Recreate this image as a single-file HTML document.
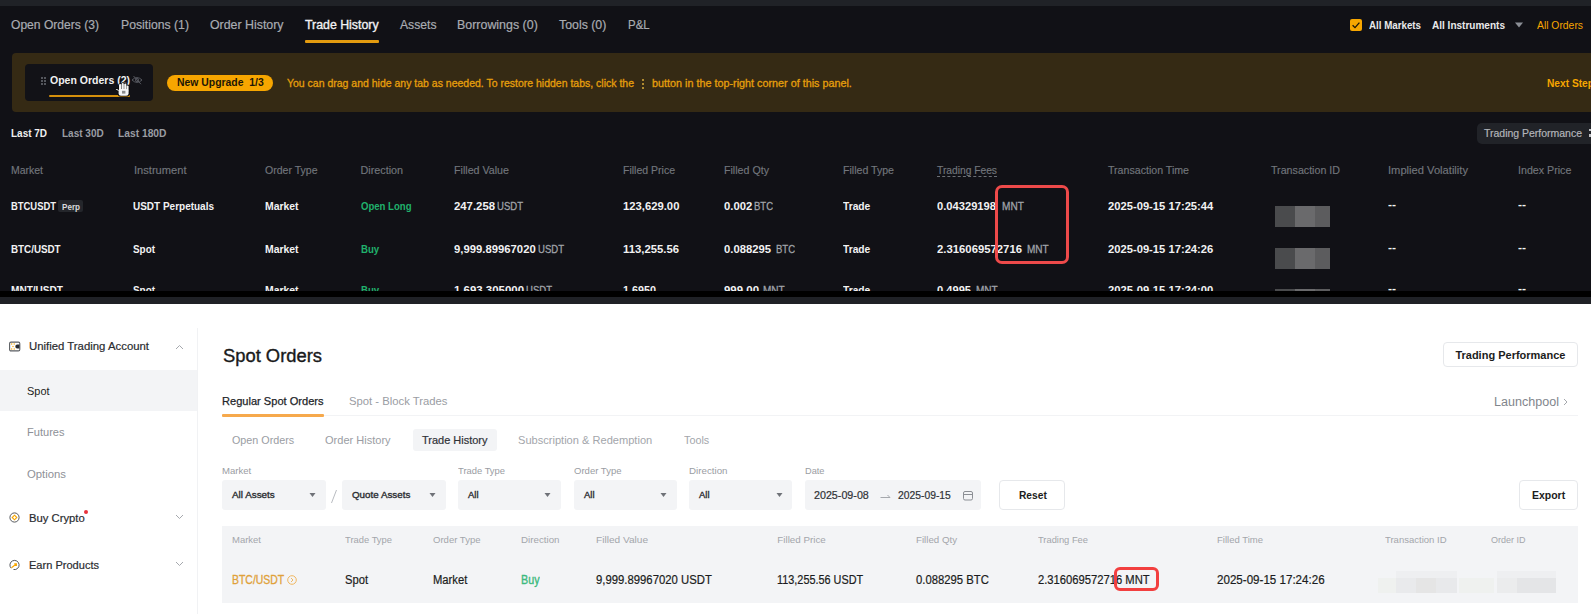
<!DOCTYPE html>
<html><head><meta charset="utf-8"><style>
html,body{margin:0;padding:0;}
body{width:1591px;height:614px;position:relative;overflow:hidden;background:#fff;font-family:"Liberation Sans",sans-serif;}
.t{position:absolute;white-space:pre;}
</style></head><body>
<div style="position:absolute;left:0px;top:0px;width:1591px;height:6px;background:#202227;"></div>
<div style="position:absolute;left:0px;top:6px;width:1591px;height:285px;background:#111116;"></div>
<div style="position:absolute;left:0px;top:291px;width:1591px;height:6px;background:#000000;"></div>
<div style="position:absolute;left:0px;top:297px;width:1591px;height:7px;background:#1f2126;"></div>
<div style="position:absolute;left:305px;top:40px;width:74px;height:3px;background:#e39b0f;border-radius:1px;"></div>
<div style="position:absolute;left:1350px;top:19px;width:12px;height:12px;background:#f7a600;border-radius:2px;"></div>
<svg style="position:absolute;left:1350px;top:19px" width="12" height="12" viewBox="0 0 12 12"><path d="M2.6 6.2 L5 8.6 L9.4 3.6" fill="none" stroke="#1a1406" stroke-width="1.3"/></svg>
<svg style="position:absolute;left:1514px;top:21px" width="10" height="8" viewBox="0 0 10 8"><path d="M1 1.5 L9 1.5 L5 6.5 Z" fill="#8c8f96"/></svg>
<div style="position:absolute;left:11.5px;top:53px;width:1579.5px;height:59px;background:#352a14;border-radius:4px 0 0 4px;"></div>
<div style="position:absolute;left:25px;top:64px;width:128px;height:37px;background:#121217;border-radius:4px;"></div>
<div style="position:absolute;left:40.5px;top:76.5px;width:2px;height:2px;background:#6b6e74;border-radius:1px"></div>
<div style="position:absolute;left:40.5px;top:79.5px;width:2px;height:2px;background:#6b6e74;border-radius:1px"></div>
<div style="position:absolute;left:40.5px;top:82.5px;width:2px;height:2px;background:#6b6e74;border-radius:1px"></div>
<div style="position:absolute;left:43.5px;top:76.5px;width:2px;height:2px;background:#6b6e74;border-radius:1px"></div>
<div style="position:absolute;left:43.5px;top:79.5px;width:2px;height:2px;background:#6b6e74;border-radius:1px"></div>
<div style="position:absolute;left:43.5px;top:82.5px;width:2px;height:2px;background:#6b6e74;border-radius:1px"></div>
<svg style="position:absolute;left:131px;top:75px" width="12" height="10" viewBox="0 0 12 10"><path d="M1 5 Q6 0.2 11 5 Q6 9.8 1 5 Z" fill="none" stroke="#5c5f66" stroke-width="0.9"/><circle cx="6" cy="5" r="1.5" fill="none" stroke="#5c5f66" stroke-width="0.9"/><path d="M2.5 1 L10 9.2" stroke="#5c5f66" stroke-width="0.9"/></svg>
<div style="position:absolute;left:49px;top:95px;width:81px;height:2px;background:#d48f0c;border-radius:1px;"></div>
<div style="position:absolute;left:167px;top:74.5px;width:106px;height:16.0px;background:#f7a600;border-radius:8px;"></div>
<div style="position:absolute;left:642px;top:79px;width:2px;height:10px;background:repeating-linear-gradient(#b08a30 0 2px, transparent 2px 4px)"></div>
<div style="position:absolute;left:1477px;top:122.5px;width:114px;height:21.5px;background:#212328;border-radius:5px 0 0 5px;"></div>
<div style="position:absolute;left:1589px;top:129px;width:2px;height:2px;background:#c0c2c6;"></div>
<div style="position:absolute;left:1589px;top:134px;width:2px;height:3px;background:#c0c2c6;"></div>
<div style="position:absolute;left:937px;top:176px;width:60px;height:0;border-top:1px dashed #6b6f75"></div>
<div style="position:absolute;left:58px;top:200px;width:25px;height:12px;background:#24262b;border-radius:2px;"></div>
<div style="position:absolute;left:1275px;top:206px;width:55px;height:21px;background:linear-gradient(90deg,#4a4b4d 0 20px,#6a6a6c 20px 40px,#5c5c5e 40px)"></div>
<div style="position:absolute;left:1275px;top:247.5px;width:55px;height:21.19999999999999px;background:linear-gradient(90deg,#4a4b4d 0 20px,#6a6a6c 20px 40px,#5c5c5e 40px)"></div>
<div style="position:absolute;left:1275px;top:289px;width:55px;height:11px;background:linear-gradient(90deg,#4a4b4d 0 20px,#6a6a6c 20px 40px,#5c5c5e 40px)"></div>
<div style="position:absolute;left:197px;top:328px;width:1px;height:286px;background:#f1f2f4;"></div>
<svg style="position:absolute;left:9px;top:341px" width="12" height="11" viewBox="0 0 12 11"><rect x="0.6" y="1.1" width="10.2" height="8.8" rx="1.4" fill="#fff" stroke="#5a5d62" stroke-width="1.1"/><g fill="#f7a600"><circle cx="2.7" cy="3" r="0.7"/><circle cx="5.2" cy="3" r="0.7"/><circle cx="4" cy="5.5" r="0.7"/><circle cx="2.7" cy="8" r="0.7"/><circle cx="5.2" cy="8" r="0.7"/></g><path d="M10.5 3.6 L8.2 3.6 A1.9 1.9 0 0 0 8.2 7.4 L10.5 7.4 Z" fill="#2a2c30"/></svg>
<svg style="position:absolute;left:175px;top:344px" width="9" height="6" viewBox="0 0 9 6"><path d="M1 5 L4.5 1.5 L8 5" fill="none" stroke="#a5a8ad" stroke-width="1"/></svg>
<div style="position:absolute;left:0px;top:370px;width:197px;height:41px;background:#f3f4f6;"></div>
<svg style="position:absolute;left:9px;top:512px" width="11" height="11" viewBox="0 0 11 11"><circle cx="5.5" cy="5.5" r="4.6" fill="none" stroke="#55585d" stroke-width="1"/><path d="M5.5 3.2 L7.8 5.5 L5.5 7.8 L3.2 5.5 Z" fill="none" stroke="#f7a600" stroke-width="1.1"/></svg>
<div style="position:absolute;left:83.5px;top:509.5px;width:4px;height:4px;border-radius:2px;background:#e8323c"></div>
<svg style="position:absolute;left:175px;top:514px" width="9" height="6" viewBox="0 0 9 6"><path d="M1 1 L4.5 4.5 L8 1" fill="none" stroke="#a5a8ad" stroke-width="1"/></svg>
<svg style="position:absolute;left:9px;top:559px" width="11" height="12" viewBox="0 0 11 12"><path d="M2.2 9.2 A4.6 4.6 0 1 1 4.5 10.5" fill="none" stroke="#55585d" stroke-width="1"/><path d="M2.5 8.8 L7.2 5 M5.2 4.8 L7.4 4.8 L7.4 7" fill="none" stroke="#f7a600" stroke-width="1.1"/></svg>
<svg style="position:absolute;left:175px;top:561px" width="9" height="6" viewBox="0 0 9 6"><path d="M1 1 L4.5 4.5 L8 1" fill="none" stroke="#a5a8ad" stroke-width="1"/></svg>
<div style="position:absolute;left:1443px;top:342px;width:135px;height:25px;box-sizing:border-box;border:1px solid #e6e8eb;border-radius:4px;background:#fff"></div>
<svg style="position:absolute;left:1563px;top:398px" width="5" height="8" viewBox="0 0 5 8"><path d="M1 1 L4 4 L1 7" fill="none" stroke="#a5a8ad" stroke-width="1"/></svg>
<div style="position:absolute;left:222px;top:414.5px;width:1356px;height:1.0px;background:#f2f3f5;"></div>
<div style="position:absolute;left:222px;top:414px;width:102px;height:2.5px;background:#f6a94c;border-radius:1px;"></div>
<div style="position:absolute;left:412.5px;top:428.5px;width:84.5px;height:22.5px;background:#f3f4f6;border-radius:3px;"></div>
<div style="position:absolute;left:222px;top:480px;width:104px;height:30px;background:#f3f4f6;border-radius:3px;"></div>
<svg style="position:absolute;left:308.5px;top:492px" width="7" height="6" viewBox="0 0 7 6"><path d="M0.5 1 L6.5 1 L3.5 5 Z" fill="#6f7278"/></svg>
<div style="position:absolute;left:342px;top:480px;width:104px;height:30px;background:#f3f4f6;border-radius:3px;"></div>
<svg style="position:absolute;left:428.5px;top:492px" width="7" height="6" viewBox="0 0 7 6"><path d="M0.5 1 L6.5 1 L3.5 5 Z" fill="#6f7278"/></svg>
<div style="position:absolute;left:458px;top:480px;width:103px;height:30px;background:#f3f4f6;border-radius:3px;"></div>
<svg style="position:absolute;left:544px;top:492px" width="7" height="6" viewBox="0 0 7 6"><path d="M0.5 1 L6.5 1 L3.5 5 Z" fill="#6f7278"/></svg>
<div style="position:absolute;left:574px;top:480px;width:103px;height:30px;background:#f3f4f6;border-radius:3px;"></div>
<svg style="position:absolute;left:660px;top:492px" width="7" height="6" viewBox="0 0 7 6"><path d="M0.5 1 L6.5 1 L3.5 5 Z" fill="#6f7278"/></svg>
<div style="position:absolute;left:689px;top:480px;width:103px;height:30px;background:#f3f4f6;border-radius:3px;"></div>
<svg style="position:absolute;left:775.5px;top:492px" width="7" height="6" viewBox="0 0 7 6"><path d="M0.5 1 L6.5 1 L3.5 5 Z" fill="#6f7278"/></svg>
<svg style="position:absolute;left:330px;top:489px" width="8" height="15" viewBox="0 0 8 15"><path d="M6.5 1 L1.5 14" stroke="#b9bcc1" stroke-width="1"/></svg>
<div style="position:absolute;left:805px;top:480px;width:176px;height:30px;background:#f3f4f6;border-radius:3px;"></div>
<svg style="position:absolute;left:880px;top:493px" width="11" height="6" viewBox="0 0 11 6"><path d="M0.5 4.5 L10 4.5 L7.5 2" fill="none" stroke="#a5a8ad" stroke-width="1"/></svg>
<svg style="position:absolute;left:962px;top:490px" width="12" height="11" viewBox="0 0 12 11"><rect x="1.5" y="1.5" width="9" height="8.5" rx="1.5" fill="none" stroke="#8c8f95" stroke-width="1"/><path d="M1.5 4.5 L10.5 4.5" stroke="#8c8f95" stroke-width="1"/></svg>
<div style="position:absolute;left:999px;top:479.5px;width:66px;height:30.5px;box-sizing:border-box;border:1px solid #e6e8eb;border-radius:4px;background:#fff"></div>
<div style="position:absolute;left:1519px;top:480px;width:59px;height:30px;box-sizing:border-box;border:1px solid #e6e8eb;border-radius:4px;background:#fff"></div>
<div style="position:absolute;left:222px;top:526px;width:1356px;height:77px;background:#f3f4f6;"></div>
<svg style="position:absolute;left:286.5px;top:574.5px" width="10" height="10" viewBox="0 0 10 10"><circle cx="5" cy="5" r="4.3" fill="none" stroke="#f0b862" stroke-width="1"/><path d="M4 3 L6 5 L4 7" fill="none" stroke="#f0b862" stroke-width="1"/></svg>
<div style="position:absolute;left:1378px;top:578px;width:18px;height:15px;background:#eff1ef"></div>
<div style="position:absolute;left:1396px;top:571px;width:61px;height:7px;background:#eeeff1"></div>
<div style="position:absolute;left:1396px;top:578px;width:61px;height:15px;background:linear-gradient(90deg,#e9eaec 0 20px,#e5e5e5 20px 40px,#e8e9eb 40px)"></div>
<div style="position:absolute;left:1459px;top:578px;width:35px;height:15px;background:#eff1ef"></div>
<div style="position:absolute;left:1497px;top:571px;width:59px;height:7px;background:#eeeff1"></div>
<div style="position:absolute;left:1497px;top:578px;width:59px;height:15px;background:linear-gradient(90deg,#ebeced 0 20px,#e4e5e7 20px)"></div>
<div class="t" style="left:11.0px;top:19.00px;font-size:12.50px;line-height:12.50px;color:#a9acb2;transform:scaleX(0.9669);transform-origin:0 0;-webkit-text-stroke:0.2px #a9acb2;">Open Orders (3)</div>
<div class="t" style="left:120.7px;top:19.00px;font-size:12.50px;line-height:12.50px;color:#a9acb2;transform:scaleX(0.9786);transform-origin:0 0;-webkit-text-stroke:0.2px #a9acb2;">Positions (1)</div>
<div class="t" style="left:210.0px;top:19.00px;font-size:12.50px;line-height:12.50px;color:#a9acb2;transform:scaleX(0.9889);transform-origin:0 0;-webkit-text-stroke:0.2px #a9acb2;">Order History</div>
<div class="t" style="left:305.0px;top:19.00px;font-size:12.50px;line-height:12.50px;color:#f2f2f3;transform:scaleX(0.9871);transform-origin:0 0;-webkit-text-stroke:0.35px #f2f2f3;">Trade History</div>
<div class="t" style="left:399.5px;top:19.00px;font-size:12.50px;line-height:12.50px;color:#a9acb2;transform:scaleX(0.9729);transform-origin:0 0;-webkit-text-stroke:0.2px #a9acb2;">Assets</div>
<div class="t" style="left:457.0px;top:19.00px;font-size:12.50px;line-height:12.50px;color:#a9acb2;transform:scaleX(0.9941);transform-origin:0 0;-webkit-text-stroke:0.2px #a9acb2;">Borrowings (0)</div>
<div class="t" style="left:559.0px;top:19.00px;font-size:12.50px;line-height:12.50px;color:#a9acb2;transform:scaleX(0.9867);transform-origin:0 0;-webkit-text-stroke:0.2px #a9acb2;">Tools (0)</div>
<div class="t" style="left:627.6px;top:19.00px;font-size:12.50px;line-height:12.50px;color:#a9acb2;transform:scaleX(0.9179);transform-origin:0 0;-webkit-text-stroke:0.2px #a9acb2;">P&amp;L</div>
<div class="t" style="left:1369.0px;top:20.00px;font-size:11.50px;line-height:11.50px;color:#e9e9ea;font-weight:700;transform:scaleX(0.8475);transform-origin:0 0;">All Markets</div>
<div class="t" style="left:1432.0px;top:20.00px;font-size:11.50px;line-height:11.50px;color:#e9e9ea;font-weight:700;transform:scaleX(0.8720);transform-origin:0 0;">All Instruments</div>
<div class="t" style="left:1537.0px;top:20.00px;font-size:11.50px;line-height:11.50px;color:#f7a600;transform:scaleX(0.8998);transform-origin:0 0;">All Orders</div>
<div class="t" style="left:49.5px;top:75.00px;font-size:11.50px;line-height:11.50px;color:#f0f0f0;font-weight:700;transform:scaleX(0.9136);transform-origin:0 0;">Open Orders (2)</div>
<div class="t" style="left:177.0px;top:77.00px;font-size:10.50px;line-height:10.50px;color:#1c1606;font-weight:700;transform:scaleX(0.9905);transform-origin:0 0;">New Upgrade  1/3</div>
<div class="t" style="left:287.0px;top:78.00px;font-size:10.80px;line-height:10.80px;color:#e59f0c;transform:scaleX(0.9716);transform-origin:0 0;-webkit-text-stroke:0.3px #e59f0c;">You can drag and hide any tab as needed. To restore hidden tabs, click the</div>
<div class="t" style="left:652.0px;top:78.00px;font-size:10.80px;line-height:10.80px;color:#e59f0c;-webkit-text-stroke:0.3px #e59f0c;">button in the top-right corner of this panel.</div>
<div class="t" style="left:1547.0px;top:78.00px;font-size:11.50px;line-height:11.50px;color:#f7a600;font-weight:700;transform:scaleX(0.8860);transform-origin:0 0;">Next Step</div>
<div class="t" style="left:11.3px;top:128.00px;font-size:11.00px;line-height:11.00px;color:#f0f0f0;font-weight:700;transform:scaleX(0.9057);transform-origin:0 0;">Last 7D</div>
<div class="t" style="left:61.6px;top:128.00px;font-size:11.00px;line-height:11.00px;color:#9a9da3;font-weight:700;transform:scaleX(0.9093);transform-origin:0 0;">Last 30D</div>
<div class="t" style="left:117.5px;top:128.00px;font-size:11.00px;line-height:11.00px;color:#9a9da3;font-weight:700;transform:scaleX(0.9330);transform-origin:0 0;">Last 180D</div>
<div class="t" style="left:1484.0px;top:128.00px;font-size:11.00px;line-height:11.00px;color:#b3b5ba;transform:scaleX(0.9522);transform-origin:0 0;-webkit-text-stroke:0.2px #b3b5ba;">Trading Performance</div>
<div class="t" style="left:11.3px;top:165.00px;font-size:10.80px;line-height:10.80px;color:#72767c;transform:scaleX(0.9697);transform-origin:0 0;-webkit-text-stroke:0.15px #72767c;">Market</div>
<div class="t" style="left:133.5px;top:165.00px;font-size:10.80px;line-height:10.80px;color:#72767c;transform:scaleX(1.0291);transform-origin:0 0;-webkit-text-stroke:0.15px #72767c;">Instrument</div>
<div class="t" style="left:265.0px;top:165.00px;font-size:10.80px;line-height:10.80px;color:#72767c;transform:scaleX(0.9756);transform-origin:0 0;-webkit-text-stroke:0.15px #72767c;">Order Type</div>
<div class="t" style="left:360.5px;top:165.00px;font-size:10.80px;line-height:10.80px;color:#72767c;-webkit-text-stroke:0.15px #72767c;">Direction</div>
<div class="t" style="left:453.7px;top:165.00px;font-size:10.80px;line-height:10.80px;color:#72767c;transform:scaleX(0.9888);transform-origin:0 0;-webkit-text-stroke:0.15px #72767c;">Filled Value</div>
<div class="t" style="left:623.4px;top:165.00px;font-size:10.80px;line-height:10.80px;color:#72767c;transform:scaleX(0.9737);transform-origin:0 0;-webkit-text-stroke:0.15px #72767c;">Filled Price</div>
<div class="t" style="left:723.8px;top:165.00px;font-size:10.80px;line-height:10.80px;color:#72767c;transform:scaleX(0.9866);transform-origin:0 0;-webkit-text-stroke:0.15px #72767c;">Filled Qty</div>
<div class="t" style="left:843.0px;top:165.00px;font-size:10.80px;line-height:10.80px;color:#72767c;transform:scaleX(0.9805);transform-origin:0 0;-webkit-text-stroke:0.15px #72767c;">Filled Type</div>
<div class="t" style="left:936.7px;top:165.00px;font-size:10.80px;line-height:10.80px;color:#72767c;transform:scaleX(0.9491);transform-origin:0 0;-webkit-text-stroke:0.15px #72767c;">Trading Fees</div>
<div class="t" style="left:1108.0px;top:165.00px;font-size:10.80px;line-height:10.80px;color:#72767c;transform:scaleX(0.9829);transform-origin:0 0;-webkit-text-stroke:0.15px #72767c;">Transaction Time</div>
<div class="t" style="left:1271.2px;top:165.00px;font-size:10.80px;line-height:10.80px;color:#72767c;transform:scaleX(0.9884);transform-origin:0 0;-webkit-text-stroke:0.15px #72767c;">Transaction ID</div>
<div class="t" style="left:1387.5px;top:165.00px;font-size:10.80px;line-height:10.80px;color:#72767c;transform:scaleX(1.0333);transform-origin:0 0;-webkit-text-stroke:0.15px #72767c;">Implied Volatility</div>
<div class="t" style="left:1518.0px;top:165.00px;font-size:10.80px;line-height:10.80px;color:#72767c;transform:scaleX(0.9886);transform-origin:0 0;-webkit-text-stroke:0.15px #72767c;">Index Price</div>
<div class="t" style="left:11.0px;top:201.00px;font-size:11.50px;line-height:11.50px;color:#f2f2f3;font-weight:700;transform:scaleX(0.8189);transform-origin:0 0;">BTCUSDT</div>
<div class="t" style="left:62.0px;top:203.00px;font-size:9.00px;line-height:9.00px;color:#d8d9db;font-weight:700;transform:scaleX(0.8993);transform-origin:0 0;">Perp</div>
<div class="t" style="left:133.2px;top:201.00px;font-size:11.50px;line-height:11.50px;color:#f2f2f3;font-weight:700;transform:scaleX(0.8681);transform-origin:0 0;">USDT Perpetuals</div>
<div class="t" style="left:265.0px;top:201.00px;font-size:11.50px;line-height:11.50px;color:#f2f2f3;font-weight:700;transform:scaleX(0.9062);transform-origin:0 0;">Market</div>
<div class="t" style="left:360.5px;top:201.00px;font-size:11.50px;line-height:11.50px;color:#20b26c;font-weight:700;transform:scaleX(0.8321);transform-origin:0 0;">Open Long</div>
<div class="t" style="left:453.7px;top:201.00px;font-size:11.50px;line-height:11.50px;color:#f2f2f3;font-weight:700;transform:scaleX(0.9861);transform-origin:0 0;">247.258</div>
<div class="t" style="left:496.8px;top:201.00px;font-size:11.50px;line-height:11.50px;color:#a0a3a9;transform:scaleX(0.8303);transform-origin:0 0;-webkit-text-stroke:0.3px #a0a3a9;">USDT</div>
<div class="t" style="left:623.4px;top:201.00px;font-size:11.50px;line-height:11.50px;color:#f2f2f3;font-weight:700;transform:scaleX(0.9798);transform-origin:0 0;">123,629.00</div>
<div class="t" style="left:723.8px;top:201.00px;font-size:11.50px;line-height:11.50px;color:#f2f2f3;font-weight:700;transform:scaleX(0.9798);transform-origin:0 0;">0.002</div>
<div class="t" style="left:754.0px;top:201.00px;font-size:11.50px;line-height:11.50px;color:#a0a3a9;transform:scaleX(0.8261);transform-origin:0 0;-webkit-text-stroke:0.3px #a0a3a9;">BTC</div>
<div class="t" style="left:843.0px;top:201.00px;font-size:11.50px;line-height:11.50px;color:#f2f2f3;font-weight:700;transform:scaleX(0.8896);transform-origin:0 0;">Trade</div>
<div class="t" style="left:937.0px;top:201.00px;font-size:11.50px;line-height:11.50px;color:#f2f2f3;font-weight:700;transform:scaleX(0.9709);transform-origin:0 0;">0.04329198</div>
<div class="t" style="left:1001.8px;top:201.00px;font-size:11.50px;line-height:11.50px;color:#a0a3a9;transform:scaleX(0.8747);transform-origin:0 0;-webkit-text-stroke:0.3px #a0a3a9;">MNT</div>
<div class="t" style="left:1108.0px;top:201.00px;font-size:11.50px;line-height:11.50px;color:#f2f2f3;font-weight:700;transform:scaleX(0.9744);transform-origin:0 0;">2025-09-15 17:25:44</div>
<div class="t" style="left:1387.5px;top:199.00px;font-size:11.00px;line-height:11.00px;color:#f2f2f3;font-weight:700;transform:scaleX(1.0917);transform-origin:0 0;">--</div>
<div class="t" style="left:1518.0px;top:199.00px;font-size:11.00px;line-height:11.00px;color:#f2f2f3;font-weight:700;transform:scaleX(1.0917);transform-origin:0 0;">--</div>
<div class="t" style="left:11.0px;top:244.00px;font-size:11.50px;line-height:11.50px;color:#f2f2f3;font-weight:700;transform:scaleX(0.8531);transform-origin:0 0;">BTC/USDT</div>
<div class="t" style="left:133.2px;top:244.00px;font-size:11.50px;line-height:11.50px;color:#f2f2f3;font-weight:700;transform:scaleX(0.8606);transform-origin:0 0;">Spot</div>
<div class="t" style="left:265.0px;top:244.00px;font-size:11.50px;line-height:11.50px;color:#f2f2f3;font-weight:700;transform:scaleX(0.9062);transform-origin:0 0;">Market</div>
<div class="t" style="left:360.5px;top:244.00px;font-size:11.50px;line-height:11.50px;color:#20b26c;font-weight:700;transform:scaleX(0.8374);transform-origin:0 0;">Buy</div>
<div class="t" style="left:453.7px;top:244.00px;font-size:11.50px;line-height:11.50px;color:#f2f2f3;font-weight:700;transform:scaleX(0.9827);transform-origin:0 0;">9,999.89967020</div>
<div class="t" style="left:538.3px;top:244.00px;font-size:11.50px;line-height:11.50px;color:#a0a3a9;transform:scaleX(0.8303);transform-origin:0 0;-webkit-text-stroke:0.3px #a0a3a9;">USDT</div>
<div class="t" style="left:623.4px;top:244.00px;font-size:11.50px;line-height:11.50px;color:#f2f2f3;font-weight:700;transform:scaleX(0.9838);transform-origin:0 0;">113,255.56</div>
<div class="t" style="left:723.8px;top:244.00px;font-size:11.50px;line-height:11.50px;color:#f2f2f3;font-weight:700;transform:scaleX(0.9798);transform-origin:0 0;">0.088295</div>
<div class="t" style="left:776.0px;top:244.00px;font-size:11.50px;line-height:11.50px;color:#a0a3a9;transform:scaleX(0.8261);transform-origin:0 0;-webkit-text-stroke:0.3px #a0a3a9;">BTC</div>
<div class="t" style="left:843.0px;top:244.00px;font-size:11.50px;line-height:11.50px;color:#f2f2f3;font-weight:700;transform:scaleX(0.8896);transform-origin:0 0;">Trade</div>
<div class="t" style="left:937.0px;top:244.00px;font-size:11.50px;line-height:11.50px;color:#f2f2f3;font-weight:700;transform:scaleX(0.9844);transform-origin:0 0;">2.316069572716</div>
<div class="t" style="left:1027.0px;top:244.00px;font-size:11.50px;line-height:11.50px;color:#a0a3a9;transform:scaleX(0.8707);transform-origin:0 0;-webkit-text-stroke:0.3px #a0a3a9;">MNT</div>
<div class="t" style="left:1108.0px;top:244.00px;font-size:11.50px;line-height:11.50px;color:#f2f2f3;font-weight:700;transform:scaleX(0.9744);transform-origin:0 0;">2025-09-15 17:24:26</div>
<div class="t" style="left:1387.5px;top:242.00px;font-size:11.00px;line-height:11.00px;color:#f2f2f3;font-weight:700;transform:scaleX(1.0917);transform-origin:0 0;">--</div>
<div class="t" style="left:1518.0px;top:242.00px;font-size:11.00px;line-height:11.00px;color:#f2f2f3;font-weight:700;transform:scaleX(1.0917);transform-origin:0 0;">--</div>
<div class="t" style="left:11.0px;top:285.00px;font-size:11.50px;line-height:11.50px;color:#f2f2f3;font-weight:700;transform:scaleX(0.8751);transform-origin:0 0;">MNT/USDT</div>
<div class="t" style="left:133.2px;top:285.00px;font-size:11.50px;line-height:11.50px;color:#f2f2f3;font-weight:700;transform:scaleX(0.8606);transform-origin:0 0;">Spot</div>
<div class="t" style="left:265.0px;top:285.00px;font-size:11.50px;line-height:11.50px;color:#f2f2f3;font-weight:700;transform:scaleX(0.9062);transform-origin:0 0;">Market</div>
<div class="t" style="left:360.5px;top:285.00px;font-size:11.50px;line-height:11.50px;color:#20b26c;font-weight:700;transform:scaleX(0.8374);transform-origin:0 0;">Buy</div>
<div class="t" style="left:453.7px;top:285.00px;font-size:11.50px;line-height:11.50px;color:#f2f2f3;font-weight:700;transform:scaleX(0.9949);transform-origin:0 0;">1,693.305000</div>
<div class="t" style="left:526.0px;top:285.00px;font-size:11.50px;line-height:11.50px;color:#a0a3a9;transform:scaleX(0.8303);transform-origin:0 0;-webkit-text-stroke:0.3px #a0a3a9;">USDT</div>
<div class="t" style="left:623.4px;top:285.00px;font-size:11.50px;line-height:11.50px;color:#f2f2f3;font-weight:700;transform:scaleX(0.9378);transform-origin:0 0;">1.6950</div>
<div class="t" style="left:723.8px;top:285.00px;font-size:11.50px;line-height:11.50px;color:#f2f2f3;font-weight:700;transform:scaleX(0.9947);transform-origin:0 0;">999.00</div>
<div class="t" style="left:763.0px;top:285.00px;font-size:11.50px;line-height:11.50px;color:#a0a3a9;transform:scaleX(0.8707);transform-origin:0 0;-webkit-text-stroke:0.3px #a0a3a9;">MNT</div>
<div class="t" style="left:843.0px;top:285.00px;font-size:11.50px;line-height:11.50px;color:#f2f2f3;font-weight:700;transform:scaleX(0.8896);transform-origin:0 0;">Trade</div>
<div class="t" style="left:937.0px;top:285.00px;font-size:11.50px;line-height:11.50px;color:#f2f2f3;font-weight:700;transform:scaleX(0.9663);transform-origin:0 0;">0.4995</div>
<div class="t" style="left:976.0px;top:285.00px;font-size:11.50px;line-height:11.50px;color:#a0a3a9;transform:scaleX(0.8707);transform-origin:0 0;-webkit-text-stroke:0.3px #a0a3a9;">MNT</div>
<div class="t" style="left:1108.0px;top:285.00px;font-size:11.50px;line-height:11.50px;color:#f2f2f3;font-weight:700;transform:scaleX(0.9744);transform-origin:0 0;">2025-09-15 17:24:00</div>
<div class="t" style="left:1387.5px;top:283.00px;font-size:11.00px;line-height:11.00px;color:#f2f2f3;font-weight:700;transform:scaleX(1.0917);transform-origin:0 0;">--</div>
<div class="t" style="left:1518.0px;top:283.00px;font-size:11.00px;line-height:11.00px;color:#f2f2f3;font-weight:700;transform:scaleX(1.0917);transform-origin:0 0;">--</div>
<div class="t" style="left:28.6px;top:341.00px;font-size:11.20px;line-height:11.20px;color:#2a2c30;transform:scaleX(1.0155);transform-origin:0 0;-webkit-text-stroke:0.2px #2a2c30;">Unified Trading Account</div>
<div class="t" style="left:27.0px;top:386.00px;font-size:11.20px;line-height:11.20px;color:#1b1c20;transform:scaleX(0.9776);transform-origin:0 0;">Spot</div>
<div class="t" style="left:27.0px;top:427.00px;font-size:11.20px;line-height:11.20px;color:#8e9197;transform:scaleX(0.9885);transform-origin:0 0;">Futures</div>
<div class="t" style="left:27.0px;top:469.00px;font-size:11.20px;line-height:11.20px;color:#8e9197;transform:scaleX(1.0113);transform-origin:0 0;">Options</div>
<div class="t" style="left:28.5px;top:513.00px;font-size:11.20px;line-height:11.20px;color:#2a2c30;transform:scaleX(1.0064);transform-origin:0 0;-webkit-text-stroke:0.2px #2a2c30;">Buy Crypto</div>
<div class="t" style="left:28.5px;top:560.00px;font-size:11.20px;line-height:11.20px;color:#2a2c30;transform:scaleX(0.9874);transform-origin:0 0;-webkit-text-stroke:0.2px #2a2c30;">Earn Products</div>
<div class="t" style="left:222.7px;top:347.00px;font-size:18.00px;line-height:18.00px;color:#1b1c20;transform:scaleX(1.0201);transform-origin:0 0;-webkit-text-stroke:0.35px #121214;">Spot Orders</div>
<div class="t" style="left:1455.4px;top:350.00px;font-size:11.00px;line-height:11.00px;color:#1b1c20;font-weight:700;">Trading Performance</div>
<div class="t" style="left:222.3px;top:396.00px;font-size:11.50px;line-height:11.50px;color:#222428;transform:scaleX(0.9633);transform-origin:0 0;-webkit-text-stroke:0.25px #222428;">Regular Spot Orders</div>
<div class="t" style="left:348.7px;top:396.00px;font-size:11.50px;line-height:11.50px;color:#9a9da3;transform:scaleX(0.9805);transform-origin:0 0;">Spot - Block Trades</div>
<div class="t" style="left:1493.5px;top:396.00px;font-size:12.50px;line-height:12.50px;color:#81858c;transform:scaleX(1.0053);transform-origin:0 0;">Launchpool</div>
<div class="t" style="left:231.8px;top:435.00px;font-size:11.50px;line-height:11.50px;color:#9a9da3;transform:scaleX(0.9356);transform-origin:0 0;">Open Orders</div>
<div class="t" style="left:325.0px;top:435.00px;font-size:11.50px;line-height:11.50px;color:#9a9da3;transform:scaleX(0.9594);transform-origin:0 0;">Order History</div>
<div class="t" style="left:422.0px;top:435.00px;font-size:11.50px;line-height:11.50px;color:#303236;transform:scaleX(0.9549);transform-origin:0 0;-webkit-text-stroke:0.2px #303236;">Trade History</div>
<div class="t" style="left:518.3px;top:435.00px;font-size:11.50px;line-height:11.50px;color:#a3a6ab;transform:scaleX(0.9630);transform-origin:0 0;">Subscription &amp; Redemption</div>
<div class="t" style="left:683.7px;top:435.00px;font-size:11.50px;line-height:11.50px;color:#a3a6ab;transform:scaleX(0.9382);transform-origin:0 0;">Tools</div>
<div class="t" style="left:222.4px;top:466.00px;font-size:9.80px;line-height:9.80px;color:#9a9da3;transform:scaleX(0.9749);transform-origin:0 0;">Market</div>
<div class="t" style="left:458.4px;top:466.00px;font-size:9.80px;line-height:9.80px;color:#9a9da3;transform:scaleX(0.9589);transform-origin:0 0;">Trade Type</div>
<div class="t" style="left:573.6px;top:466.00px;font-size:9.80px;line-height:9.80px;color:#9a9da3;transform:scaleX(0.9728);transform-origin:0 0;">Order Type</div>
<div class="t" style="left:689.3px;top:466.00px;font-size:9.80px;line-height:9.80px;color:#9a9da3;transform:scaleX(0.9956);transform-origin:0 0;">Direction</div>
<div class="t" style="left:804.7px;top:466.00px;font-size:9.80px;line-height:9.80px;color:#9a9da3;transform:scaleX(0.9419);transform-origin:0 0;">Date</div>
<div class="t" style="left:231.5px;top:490.00px;font-size:9.60px;line-height:9.60px;color:#2a2c30;transform:scaleX(1.0266);transform-origin:0 0;-webkit-text-stroke:0.35px #2a2c30;">All Assets</div>
<div class="t" style="left:351.5px;top:490.00px;font-size:9.60px;line-height:9.60px;color:#2a2c30;transform:scaleX(1.0217);transform-origin:0 0;-webkit-text-stroke:0.35px #2a2c30;">Quote Assets</div>
<div class="t" style="left:467.5px;top:490.00px;font-size:9.60px;line-height:9.60px;color:#2a2c30;transform:scaleX(0.9839);transform-origin:0 0;-webkit-text-stroke:0.35px #2a2c30;">All</div>
<div class="t" style="left:583.5px;top:490.00px;font-size:9.60px;line-height:9.60px;color:#2a2c30;transform:scaleX(0.9839);transform-origin:0 0;-webkit-text-stroke:0.35px #2a2c30;">All</div>
<div class="t" style="left:698.5px;top:490.00px;font-size:9.60px;line-height:9.60px;color:#2a2c30;transform:scaleX(0.9839);transform-origin:0 0;-webkit-text-stroke:0.35px #2a2c30;">All</div>
<div class="t" style="left:813.8px;top:490.00px;font-size:10.50px;line-height:10.50px;color:#303236;transform:scaleX(1.0201);transform-origin:0 0;-webkit-text-stroke:0.2px #303236;">2025-09-08</div>
<div class="t" style="left:898.0px;top:490.00px;font-size:10.50px;line-height:10.50px;color:#303236;transform:scaleX(0.9829);transform-origin:0 0;-webkit-text-stroke:0.2px #303236;">2025-09-15</div>
<div class="t" style="left:1018.5px;top:490.00px;font-size:11.00px;line-height:11.00px;color:#1b1c20;font-weight:700;transform:scaleX(0.9276);transform-origin:0 0;">Reset</div>
<div class="t" style="left:1531.5px;top:490.00px;font-size:11.00px;line-height:11.00px;color:#1b1c20;font-weight:700;transform:scaleX(0.9528);transform-origin:0 0;">Export</div>
<div class="t" style="left:231.5px;top:535.00px;font-size:9.80px;line-height:9.80px;color:#a3a6ab;transform:scaleX(0.9682);transform-origin:0 0;">Market</div>
<div class="t" style="left:344.8px;top:535.00px;font-size:9.80px;line-height:9.80px;color:#a3a6ab;transform:scaleX(0.9589);transform-origin:0 0;">Trade Type</div>
<div class="t" style="left:432.7px;top:535.00px;font-size:9.80px;line-height:9.80px;color:#a3a6ab;transform:scaleX(0.9728);transform-origin:0 0;">Order Type</div>
<div class="t" style="left:520.5px;top:535.00px;font-size:9.80px;line-height:9.80px;color:#a3a6ab;transform:scaleX(0.9956);transform-origin:0 0;">Direction</div>
<div class="t" style="left:596.0px;top:535.00px;font-size:9.80px;line-height:9.80px;color:#a3a6ab;transform:scaleX(1.0303);transform-origin:0 0;">Filled Value</div>
<div class="t" style="left:777.3px;top:535.00px;font-size:9.80px;line-height:9.80px;color:#a3a6ab;">Filled Price</div>
<div class="t" style="left:916.2px;top:535.00px;font-size:9.80px;line-height:9.80px;color:#a3a6ab;transform:scaleX(0.9909);transform-origin:0 0;">Filled Qty</div>
<div class="t" style="left:1037.7px;top:535.00px;font-size:9.80px;line-height:9.80px;color:#a3a6ab;transform:scaleX(0.9529);transform-origin:0 0;">Trading Fee</div>
<div class="t" style="left:1217.4px;top:535.00px;font-size:9.80px;line-height:9.80px;color:#a3a6ab;transform:scaleX(0.9710);transform-origin:0 0;">Filled Time</div>
<div class="t" style="left:1385.0px;top:535.00px;font-size:9.80px;line-height:9.80px;color:#a3a6ab;transform:scaleX(0.9709);transform-origin:0 0;">Transaction ID</div>
<div class="t" style="left:1491.4px;top:535.00px;font-size:9.80px;line-height:9.80px;color:#a3a6ab;transform:scaleX(0.9185);transform-origin:0 0;">Order ID</div>
<div class="t" style="left:231.5px;top:574.00px;font-size:12.00px;line-height:12.00px;color:#e0a139;transform:scaleX(0.8700);transform-origin:0 0;-webkit-text-stroke:0.3px #e0a139;">BTC/USDT</div>
<div class="t" style="left:344.8px;top:574.00px;font-size:12.00px;line-height:12.00px;color:#1b1c20;transform:scaleX(0.9316);transform-origin:0 0;-webkit-text-stroke:0.2px #1b1c20;">Spot</div>
<div class="t" style="left:432.7px;top:574.00px;font-size:12.00px;line-height:12.00px;color:#1b1c20;transform:scaleX(0.9349);transform-origin:0 0;-webkit-text-stroke:0.2px #1b1c20;">Market</div>
<div class="t" style="left:520.5px;top:574.00px;font-size:12.00px;line-height:12.00px;color:#3dba7e;transform:scaleX(0.8943);transform-origin:0 0;-webkit-text-stroke:0.35px #3dba7e;">Buy</div>
<div class="t" style="left:596.4px;top:574.00px;font-size:12.00px;line-height:12.00px;color:#1b1c20;transform:scaleX(0.9433);transform-origin:0 0;-webkit-text-stroke:0.2px #1b1c20;">9,999.89967020 USDT</div>
<div class="t" style="left:777.3px;top:574.00px;font-size:12.00px;line-height:12.00px;color:#1b1c20;transform:scaleX(0.9057);transform-origin:0 0;-webkit-text-stroke:0.2px #1b1c20;">113,255.56 USDT</div>
<div class="t" style="left:916.2px;top:574.00px;font-size:12.00px;line-height:12.00px;color:#1b1c20;transform:scaleX(0.9407);transform-origin:0 0;-webkit-text-stroke:0.2px #1b1c20;">0.088295 BTC</div>
<div class="t" style="left:1037.7px;top:574.00px;font-size:12.00px;line-height:12.00px;color:#1b1c20;transform:scaleX(0.9345);transform-origin:0 0;-webkit-text-stroke:0.2px #1b1c20;">2.316069572716 MNT</div>
<div class="t" style="left:1217.4px;top:574.00px;font-size:12.00px;line-height:12.00px;color:#1b1c20;transform:scaleX(0.9656);transform-origin:0 0;-webkit-text-stroke:0.2px #1b1c20;">2025-09-15 17:24:26</div>
<svg style="position:absolute;left:112px;top:81px" width="18" height="16" viewBox="0 0 18 16">
<g stroke="#0a0a0a" stroke-width="1.6" fill="#0a0a0a" stroke-linejoin="round">
<rect x="7" y="3" width="2.2" height="7" rx="1.1"/><rect x="9.6" y="2" width="2.2" height="8" rx="1.1"/><rect x="12.2" y="2.6" width="2.2" height="7.4" rx="1.1"/><rect x="14.6" y="4.4" width="2" height="6" rx="1"/>
<path d="M3.6 8.4 Q4.6 7.4 6 8.6 L8 10.6 Z"/><rect x="6.6" y="8" width="10" height="6.8" rx="2.4"/></g>
<g fill="#f4f4f4">
<rect x="7" y="3" width="2.2" height="7" rx="1.1"/><rect x="9.6" y="2" width="2.2" height="8" rx="1.1"/><rect x="12.2" y="2.6" width="2.2" height="7.4" rx="1.1"/><rect x="14.6" y="4.4" width="2" height="6" rx="1"/>
<path d="M3.6 8.4 Q4.6 7.4 6 8.6 L8 10.6 Z"/><rect x="6.6" y="8" width="10" height="6.8" rx="2.4"/></g>
<rect x="10" y="9.8" width="3.4" height="2.8" fill="#8a8a8a"/></svg>
<div style="position:absolute;left:0;top:291px;width:1591px;height:6px;background:#000"></div>
<div style="position:absolute;left:0;top:297px;width:1591px;height:7px;background:#1f2126"></div>
<div style="position:absolute;left:0;top:304px;width:1591px;height:10px;background:#fff"></div>
<div style="position:absolute;left:995px;top:185px;width:74px;height:79px;box-sizing:border-box;border:3.5px solid #ee4a4a;border-radius:7px"></div>
<div style="position:absolute;left:1114px;top:566.5px;width:44.5px;height:24px;box-sizing:border-box;border:3.5px solid #f23f3f;border-radius:6px"></div>
</body></html>
